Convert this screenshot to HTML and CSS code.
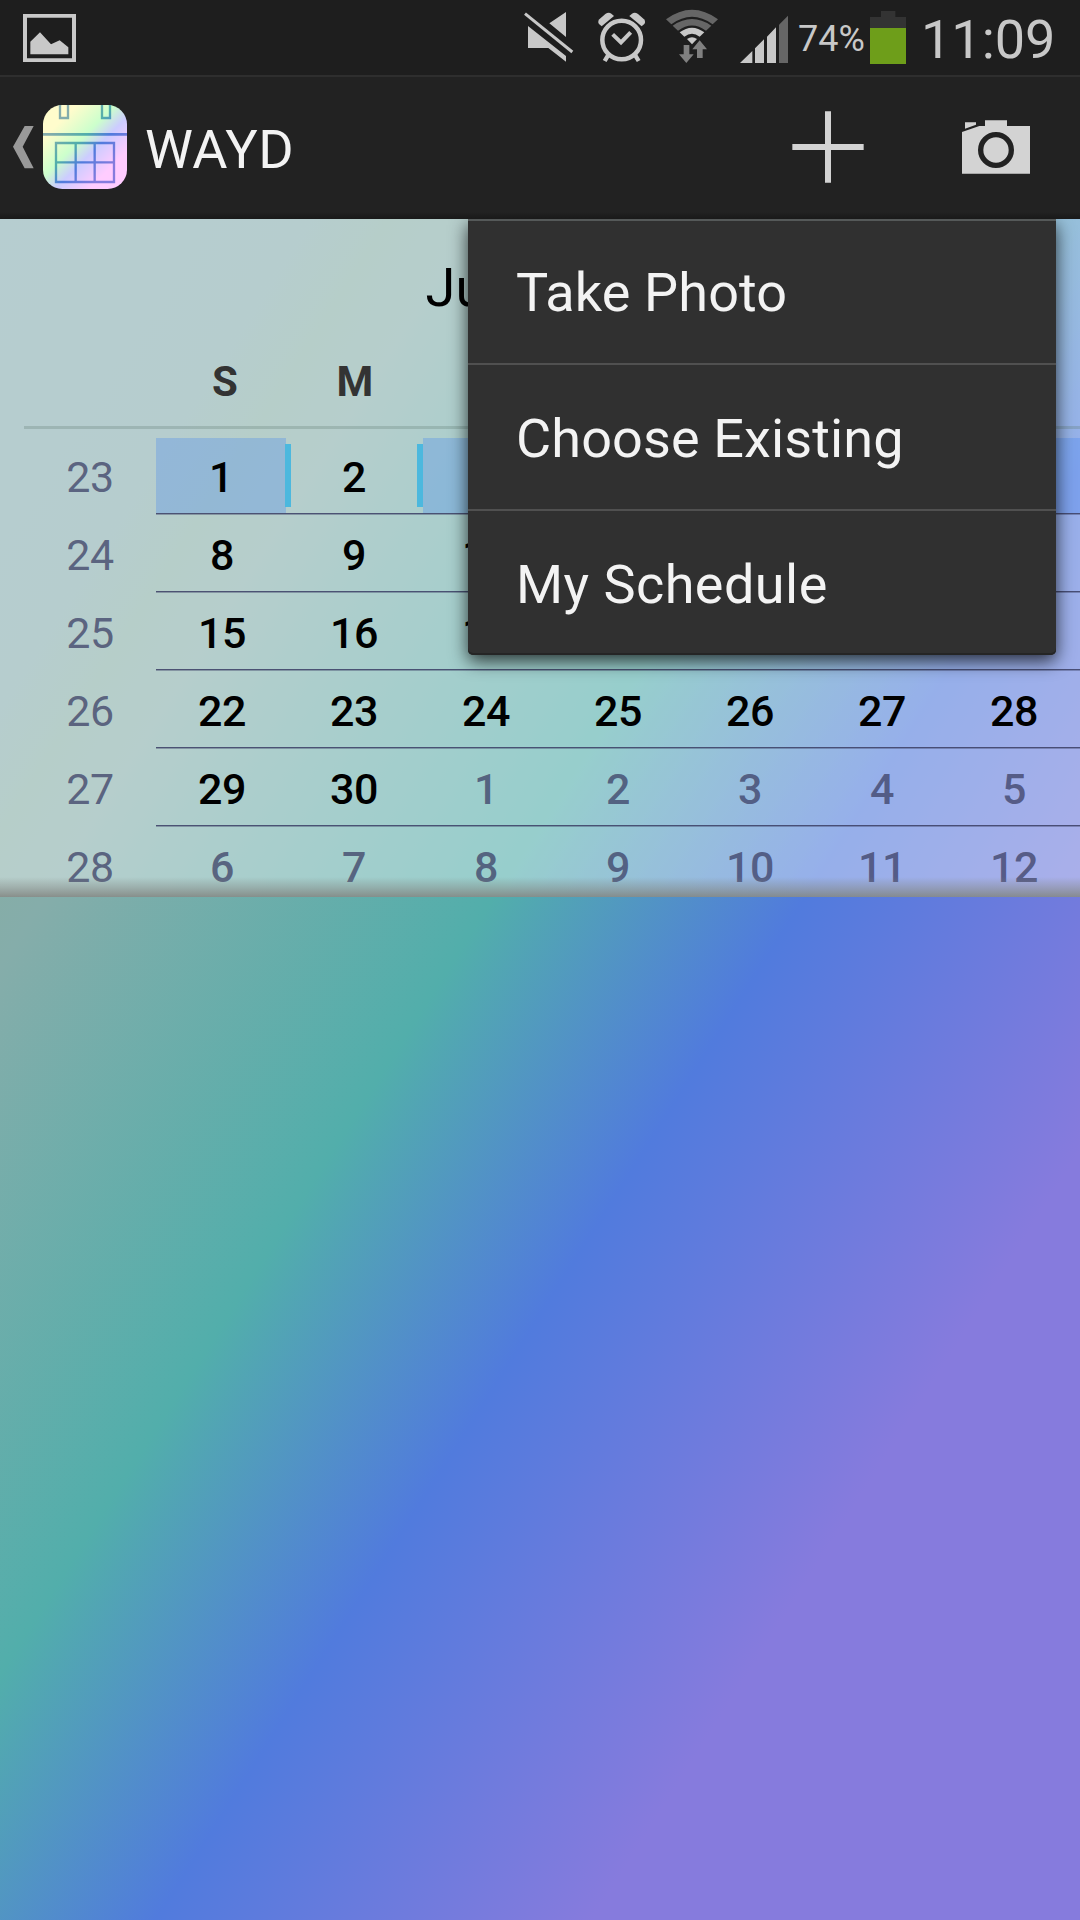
FILE: index.html
```html
<!DOCTYPE html>
<html lang="en">
<head>
<meta charset="utf-8">
<title>WAYD</title>
<link rel="stylesheet" href="styles.css">
</head>
<body>
<div class="screen">
  <div class="status">
    <svg class="icon picture" viewBox="68 42 159 144" width="53" height="48">
      <path fill-rule="evenodd" d="M68 42H227V186H68ZM80 53V175H215V53Z"/>
      <path d="M90 125L119 97L152 133L178 121L204 142V163H90Z"/>
    </svg>
    <svg class="icon mute" viewBox="72 36 150 150" width="50" height="50">
      <path d="M84 78V144H145L198 185V168ZM198 36L148 70L198 111Z"/>
      <path class="line" stroke-width="9" d="M75 41L217 156"/>
    </svg>
    <svg class="icon alarm" viewBox="291 36 147 153" width="49" height="51">
      <circle class="line" stroke-width="13.5" cx="365" cy="120" r="58"/>
      <path class="line" stroke-width="12" d="M338 103L363 127L392 97"/>
      <path d="M305 79L297 72Q292 65 298 58L316 42Q326 35 334 41L342 48Z"/>
      <path d="M425 79L433 72Q438 65 432 58L414 42Q404 35 396 41L388 48Z"/>
      <path class="line" stroke-width="13" d="M326 163L314 183M404 163L416 183"/>
    </svg>
    <svg class="icon wifi" viewBox="498 27 156 162" width="52" height="54">
      <g class="dim"><path d="M498 58Q576 1 654 58L638 73Q576 28 514 73Z"/>
      <path d="M518 77Q576 37 634 77L618 92Q576 61 534 92Z"/></g>
      <path d="M539 97Q576 69 613 97L599 110Q576 93 553 110Z"/>
      <path d="M561 117Q576 106 591 117L576 133Z"/>
      <path class="arrows" stroke="#1e1e1e" stroke-width="6" paint-order="stroke" d="M599 121L621 148H608V174H591V148H577Z"/>
      <path class="arrows" d="M551 135H568V163H581L559 189L537 163H551Z"/>
    </svg>
    <svg class="icon signal" viewBox="720 45 144 144" width="48" height="48">
      <path d="M720 189L757 153V189ZM765 189V145L792 118V189ZM801 189V110L828 82V189Z"/>
      <path class="dim" d="M837 189V74L864 47V189Z"/>
    </svg>
    <span class="percent">74%</span>
    <svg class="icon battery" viewBox="270 33 108 159" width="36" height="53">
      <path fill="#333" d="M270 51H303V33H346V51H378V84H270Z"/>
      <path fill="#6e9e1a" d="M270 84H378V192H270Z"/>
    </svg>
    <span class="clock">11:09</span>
  </div>

  <div class="actionbar">
    <svg class="back" viewBox="36 372 69 138" width="23" height="46">
      <path d="M74 378H101L68 440L101 505H74L39 440Z"/>
    </svg>
    <svg class="logo" viewBox="129 315 252 252" width="84" height="84">
      <defs>
        <linearGradient id="pale" x1="0" y1="0" x2="1" y2="1">
          <stop offset=".2" stop-color="#fffccc"/><stop offset=".43" stop-color="#ccffcc"/>
          <stop offset=".572" stop-color="#ccccff"/><stop offset=".774" stop-color="#ffccff"/>
        </linearGradient>
        <linearGradient id="deep" gradientUnits="userSpaceOnUse" x1="129" y1="315" x2="381" y2="567">
          <stop offset=".2" stop-color="#85acac"/><stop offset=".43" stop-color="#52aeab"/>
          <stop offset=".572" stop-color="#517bdd"/><stop offset=".774" stop-color="#867bdd"/>
        </linearGradient>
      </defs>
      <rect x="129" y="315" width="252" height="252" rx="58" fill="url(#pale)"/>
      <g fill="none" stroke="url(#deep)" stroke-width="7">
        <path d="M180 315V354H204V315M306 315V354H330V315"/>
        <path stroke-width="8" d="M129 403H381.1V403.1"/>
        <path d="M168 429H342V546H168ZM227 429V546M284 429V546M168 487H342V487.1"/>
      </g>
    </svg>
    <h1 class="name">WAYD</h1>
    <svg class="tool plus" viewBox="36 333 216 216" width="72" height="72">
      <path d="M135 334H153V432H251V450H153V548H135V450H37V432H135Z"/>
    </svg>
    <svg class="tool camera" viewBox="546 360 204 162" width="68" height="54">
      <path d="M546 396L598 378H615V361H681V378H750V521H546ZM555 367H588V374L555 386Z"/>
      <circle cx="648" cy="450" r="46" fill="none" stroke="#222" stroke-width="16"/>
    </svg>
  </div>

  <main class="content">
    <section class="calendar">
      <h2 class="month">June 2014</h2>
      <div class="weekdays"><span>S</span><span>M</span></div>
      <div class="week first"><span class="no">23</span><div class="days"><b class="hl start">1</b><b class="today">2</b><b class="hl end"></b><b class="hl"></b><b class="hl"></b><b class="hl"></b><b class="hl"></b></div></div>
      <div class="week"><span class="no">24</span><div class="days"><b>8</b><b>9</b><b>10</b></div></div>
      <div class="week"><span class="no">25</span><div class="days"><b>15</b><b>16</b><b>17</b></div></div>
      <div class="week"><span class="no">26</span><div class="days"><b>22</b><b>23</b><b>24</b><b>25</b><b>26</b><b>27</b><b>28</b></div></div>
      <div class="week"><span class="no">27</span><div class="days"><b>29</b><b>30</b><b class="out">1</b><b class="out">2</b><b class="out">3</b><b class="out">4</b><b class="out">5</b></div></div>
      <div class="week"><span class="no">28</span><div class="days"><b class="out">6</b><b class="out">7</b><b class="out">8</b><b class="out">9</b><b class="out">10</b><b class="out">11</b><b class="out">12</b></div></div>
    </section>
    <ul class="menu">
      <li>Take Photo</li>
      <li>Choose Existing</li>
      <li>My Schedule</li>
    </ul>
  </main>
</div>
</body>
</html>
```
FILE: styles.css
```css
* { box-sizing: border-box; margin: 0; padding: 0; }
body { background: #222; font-family: Roboto, "Noto Sans", sans-serif; }
svg { display: block; flex: none; }
.screen { width: 1080px; height: 1920px; display: flex; flex-direction: column; overflow: hidden; }

/* System status bar */
.status { height: 75px; flex: none; display: flex; align-items: flex-start; padding-left: 22.7px; background: #1e1e1e; color: #c8c8c8; white-space: nowrap; }
.icon { fill: #c8c8c8; }
.icon .line { fill: none; stroke: #c8c8c8; }
.icon .dim { fill: #666; }
.icon .arrows { fill: #808080; }
.picture { margin-top: 14px; }
.mute { margin: 12px 0 0 448.3px; }
.alarm { margin: 12px 0 0 23px; }
.wifi { margin: 9px 0 0 20px; }
.signal { margin: 15px 0 0 22px; }
.percent { width: 72px; padding-left: 10px; margin-top: 18px; font-size: 36px; line-height: 42px; }
.battery { margin: 11px 0 0 10px; }
.clock { margin: 8px 0 0 15px; font-size: 54px; line-height: 64px; }

/* Action bar */
.actionbar { height: 144px; flex: none; display: flex; align-items: flex-start; padding-left: 12px; background: linear-gradient(#2e2e2e 0 2px, #222 2px 137px, #1a1a1a 143px); position: relative; z-index: 2; }
.back { margin-top: 49px; fill: #999; }
.logo { margin: 30px 0 0 8px; }
.name { width: 645px; padding-left: 18px; margin-top: 43px; font-size: 54px; line-height: 64px; font-weight: 400; letter-spacing: .4px; color: #f3f3f3; }
.tool { fill: #d3d3d3; }
.plus { margin: 36px 0 0 20px; }
.camera { margin: 45px 0 0 98px; }

.content { flex: 1; min-height: 0; position: relative; background: linear-gradient(to bottom right, #85acb1 0, #85acae 14%, #86ada6 18%, #85adaa 22%, #52aeab 42.8%, #517bdd 57.2%, #867bdd 77.4%); }

/* Month panel */
.calendar { height: 678px; overflow: hidden; position: relative; background: rgba(255,255,255,.4); }
.calendar::after { content: ""; position: absolute; left: 0; right: 0; bottom: 0; height: 20px; background: linear-gradient(rgba(128,132,128,0), rgba(128,132,128,.4) 50%, rgba(128,132,128,.85)); }
.month { height: 128px; margin-left: 24px; padding-top: 37px; text-align: center; font-size: 54px; line-height: 64px; font-weight: 400; color: #000; }
.weekdays { height: 82px; margin-left: 24px; padding: 10px 0 0 136px; display: grid; grid-template-columns: repeat(7, 130px); border-bottom: 3px solid rgba(100,125,120,.3); text-align: center; font-size: 42px; line-height: 50px; font-weight: 700; color: #333; }
.week { height: 78px; padding-left: 24px; display: flex; font-size: 43px; letter-spacing: -.4px; line-height: 48px; text-align: center; }
.week.first { height: 84px; padding-top: 9px; }
.no { width: 132px; padding-top: 18px; color: rgba(61,65,103,.76); }
.days { flex: 1; display: grid; grid-template-columns: repeat(7, 132px); box-shadow: inset 0 1px rgba(61,65,103,.8), inset 0 2px rgba(61,65,103,.4); }
.days b { font-weight: 500; padding-top: 18px; color: #000; }
.days .out { color: rgba(61,65,103,.76); }
.first .days { box-shadow: none; }
.first .no, .first .days b { padding-top: 15px; }
.hl { background: rgba(56,125,244,.27); }
.days .start { margin-right: 2px; }
.today { position: relative; }
.today::before, .today::after { content: ""; position: absolute; top: 6px; width: 6px; height: 63px; background: #4cb8de; }
.today::before { left: -3px; }
.today::after { right: -3px; }
.days .end { margin-left: 3px; }

/* Overflow menu */
.menu { position: absolute; left: 468px; top: 0; width: 588px; height: 436px; list-style: none; border-radius: 0 0 5px 5px; background: #303030; box-shadow: inset 0 2px #555959, inset 0 -2px #252525, 0 6px 18px rgba(0,0,0,.75); }
.menu li { height: 146px; padding: 42px 48px 0; font-size: 54px; line-height: 64px; letter-spacing: .12px; color: #f3f3f3; border-bottom: 2px solid #505050; }
.menu li:last-child { border: 0; letter-spacing: .45px; }
```
